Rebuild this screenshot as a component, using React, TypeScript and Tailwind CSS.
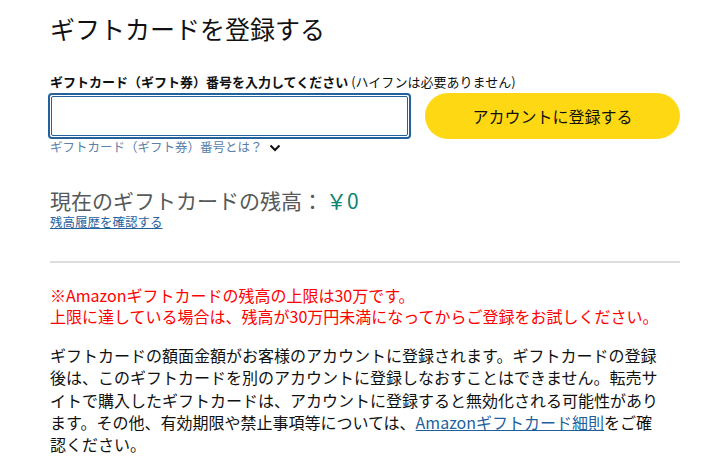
import React from 'react';

const font = { fontFamily: '"Noto Sans CJK JP", "Noto Sans", sans-serif' };

const ChevronDown = () => (
  <svg width="12" height="8" viewBox="0 0 12 8" className="ml-[6px] mt-[1px]">
    <polyline points="1.5,1.5 6,6 10.5,1.5" fill="none" stroke="#111" strokeWidth="2" />
  </svg>
);

export default function App() {
  return (
    <div style={font} className="w-[703px] h-[465px] bg-white overflow-hidden pl-[50px] pt-[10px] text-[#0f1111]">
      <div className="w-[630px]">
        <h1 className="text-[25px] leading-[36px] font-normal text-[#111]">ギフトカードを登録する</h1>

        <div className="mt-[27px] text-[13px] leading-[18px] whitespace-nowrap">
          <span className="font-bold">ギフトカード（ギフト券）番号を入力してください</span>
          <span> (ハイフンは必要ありません)</span>
        </div>

        <div className="mt-[2px] -ml-[2px] flex items-center gap-[14px]">
          <div className="w-[363px] h-[46px] border-2 border-[#23609c] rounded-[4px] p-[1px]">
            <div className="w-full h-full border border-[#23609c] rounded-[2px] bg-white" />
          </div>
          <button className="w-[255px] h-[46px] rounded-full bg-[#ffd814] text-[16px] text-[#0f1111]">
            アカウントに登録する
          </button>
        </div>

        <div className="flex items-center text-[12.5px] leading-[16px] text-[#5b80aa]">
          <span>ギフトカード（ギフト券）番号とは？</span>
          <ChevronDown />
        </div>

        <div className="mt-[31px] text-[21px] leading-[28px] text-[#565959]">
          現在のギフトカードの残高：<span className="ml-[3px] text-[#0f8471]">￥0</span>
        </div>
        <a href="#" className="block text-[12.5px] leading-[16px] text-[#1f5f9c] underline">
          残高履歴を確認する
        </a>

        <div className="mt-[31px] border-t-2 border-[#dddddd]" />

        <div className="mt-[22px] text-[16px] leading-[21px] text-[#ff0000]">
          <p>※Amazonギフトカードの残高の上限は30万です。</p>
          <p>上限に達している場合は、残高が30万円未満になってからご登録をお試しください。</p>
        </div>

        <p className="mt-[17px] w-[612px] text-[16px] leading-[22.3px] text-[#0f1111]">
          ギフトカードの額面金額がお客様のアカウントに登録されます。ギフトカードの登録後は、このギフトカードを別のアカウントに登録しなおすことはできません。転売サイトで購入したギフトカードは、アカウントに登録すると無効化される可能性があります。その他、有効期限や禁止事項等については、
          <a href="#" className="text-[#1f5f9c] underline">Amazonギフトカード細則</a>
          をご確認ください。
        </p>
      </div>
    </div>
  );
}
